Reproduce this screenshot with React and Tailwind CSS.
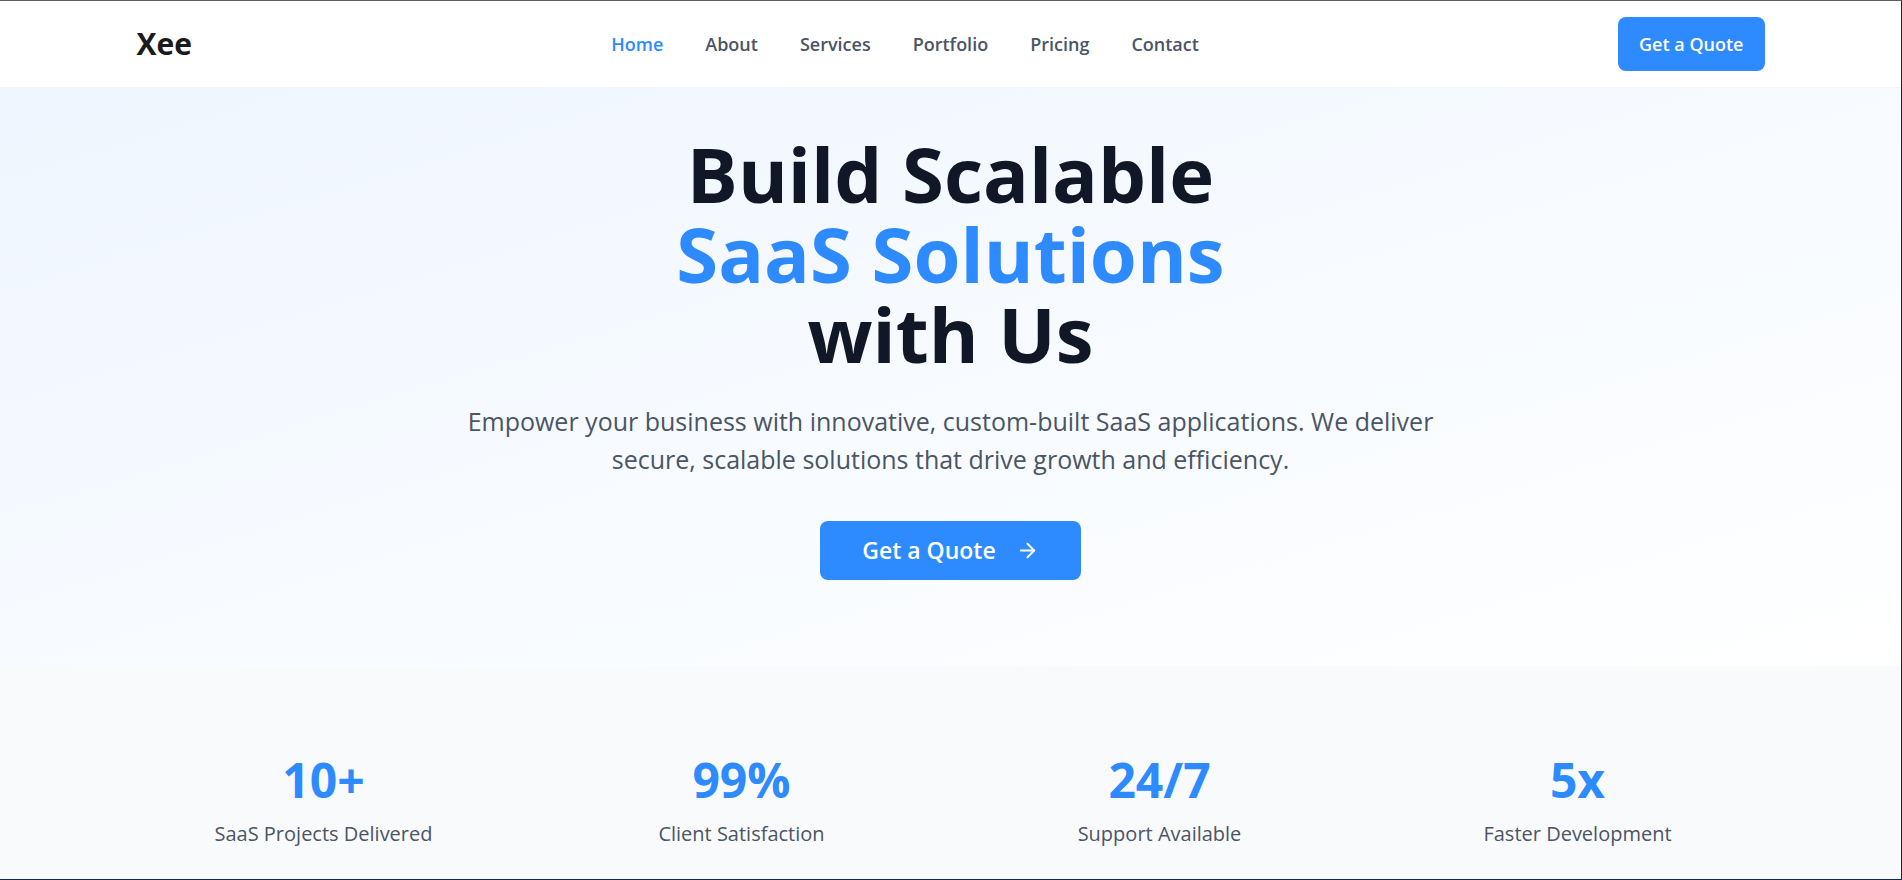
import { ArrowRight } from "lucide-react";

const links = ["Home", "About", "Services", "Portfolio", "Pricing", "Contact"];

const stats = [
  { value: "10+", label: "SaaS Projects Delivered" },
  { value: "99%", label: "Client Satisfaction" },
  { value: "24/7", label: "Support Available" },
  { value: "5x", label: "Faster Development" },
];

function Header() {
  return (
    <header className="border-b border-gray-100 bg-white">
      <div className="mx-auto flex w-full max-w-[1700px] items-center justify-between px-9 py-4">
        <a href="#" className="text-[30px] leading-9 font-bold text-[#1a1a1a]">
          Xee
        </a>
        <nav className="flex gap-[42px]">
          {links.map((link) => (
            <a
              key={link}
              href="#"
              className={
                link === "Home"
                  ? "text-[18px] leading-7 font-semibold text-[#2e8aff]"
                  : "text-[18px] leading-7 font-semibold text-gray-600"
              }
            >
              {link}
            </a>
          ))}
        </nav>
        <button
          type="button"
          className="rounded-lg bg-[#2e8aff] px-[21px] py-[13px] text-[18px] leading-7 font-semibold text-white"
        >
          Get a Quote
        </button>
      </div>
    </header>
  );
}

function Hero() {
  return (
    <section className="bg-linear-to-br from-[#eff6ff] to-white px-9 pt-[46px] pb-[86px] text-center">
      <h1 className="text-[76px] leading-[80px] font-bold text-gray-900">
        Build Scalable
        <span className="block text-[#2e8aff]">SaaS Solutions</span>
        with Us
      </h1>
      <p className="mx-auto mt-7 max-w-[1010px] text-[25px] leading-[38px] text-gray-600">
        Empower your business with innovative, custom-built SaaS applications.
        We deliver secure, scalable solutions that drive growth and efficiency.
      </p>
      <button
        type="button"
        className="mt-[43px] inline-flex items-center gap-5 rounded-lg bg-[#2e8aff] px-[42px] py-[14px] text-[23px] leading-[31px] font-semibold text-white"
      >
        Get a Quote
        <ArrowRight size={23} strokeWidth={2} aria-hidden="true" />
      </button>
    </section>
  );
}

function Stats() {
  return (
    <section className="grow bg-gray-50 pt-[87px] pb-6">
      <dl className="mx-auto grid w-full max-w-[1700px] grid-cols-4 gap-11 px-9 text-center">
        {stats.map((stat) => (
          <div key={stat.label} className="flex flex-col-reverse gap-3">
            <dt className="text-[20px] leading-[30px] text-gray-600">
              {stat.label}
            </dt>
            <dd className="text-[48px] leading-[54px] font-bold text-[#2e8aff]">
              {stat.value}
            </dd>
          </div>
        ))}
      </dl>
    </section>
  );
}

export default function App() {
  return (
    <div className="flex min-h-screen flex-col border-t border-r border-b border-t-[#5f5f5f] border-r-[#202428] border-b-[#14294f] bg-white font-['Segoe_UI','Open_Sans','Noto_Sans',sans-serif]">
      <Header />
      <main className="flex grow flex-col">
        <Hero />
        <Stats />
      </main>
    </div>
  );
}
